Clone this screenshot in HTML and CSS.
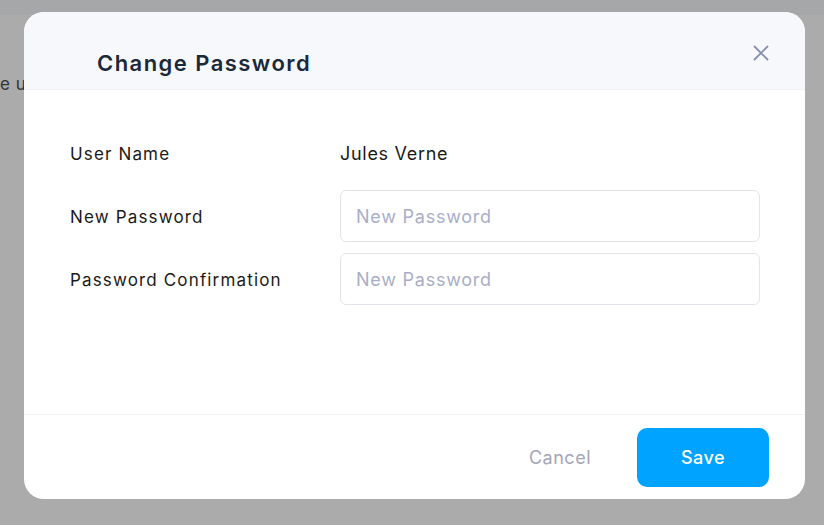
FILE: index.html
```html
<!DOCTYPE html>
<html>
<head>
<meta charset="utf-8">
<link rel="stylesheet" href="styles.css">
</head>
<body>
<div class="page">
  <div class="topbar"></div>
  <div class="behind-text">e u</div>
</div>
<div class="overlay">
  <div class="modal">
    <div class="modal-header">
      <h2 class="modal-title">Change Password</h2>
      <button class="close-btn" aria-label="Close">
        <svg width="16" height="16" viewBox="0 0 16 16"><path d="M1.5 1.5 L14.5 14.5 M14.5 1.5 L1.5 14.5" stroke="#8a8eae" stroke-width="1.8" stroke-linecap="round" fill="none"/></svg>
      </button>
    </div>
    <div class="modal-body">
      <div class="row">
        <div class="label">User Name</div>
        <div class="value">Jules Verne</div>
      </div>
      <div class="row">
        <div class="label">New Password</div>
        <input class="input" type="password" placeholder="New Password">
      </div>
      <div class="row">
        <div class="label">Password Confirmation</div>
        <input class="input" type="password" placeholder="New Password">
      </div>
    </div>
    <div class="modal-footer">
      <button class="btn-cancel">Cancel</button>
      <button class="btn-save">Save</button>
    </div>
  </div>
</div>
</body>
</html>
```
FILE: styles.css
```css
* { box-sizing: border-box; }
html, body { margin: 0; padding: 0; }
body {
  width: 824px;
  height: 525px;
  background: #ababab;
  font-family: "Inter", "Open Sans", sans-serif;
  overflow: hidden;
  position: relative;
}
.page { height: 525px; }
.topbar { height: 15px; background: #a6a7a9; }
.behind-text {
  margin-top: 58px;
  font-size: 17px;
  line-height: 22px;
  letter-spacing: 0.5px;
  color: #333;
}
.overlay {
  position: absolute;
  inset: 0;
  padding: 12px 19px 0 24px;
}
.modal {
  width: 781px;
  height: 487px;
  background: #fff;
  border-radius: 20px;
  overflow: hidden;
  display: flex;
  flex-direction: column;
}
.modal-header {
  height: 78px;
  background: #f7f8fc;
  border-bottom: 1px solid #eef0f5;
  display: flex;
  justify-content: space-between;
  align-items: flex-start;
  padding: 0 36px 0 73px;
}
.modal-title {
  margin: 36px 0 0;
  font-size: 22px;
  line-height: 30px;
  font-weight: 600;
  letter-spacing: 1.45px;
  color: #1b2a3a;
}
.close-btn {
  margin-top: 33px;
  padding: 0;
  border: 0;
  background: none;
  width: 16px;
  height: 16px;
  display: flex;
}
.modal-body {
  flex: 1;
  padding: 37px 45px 0 46px;
  display: flex;
  flex-direction: column;
  gap: 11px;
}
.row {
  display: flex;
  align-items: center;
  height: 52px;
}
.label {
  width: 270px;
  font-size: 17px;
  line-height: 22px;
  padding-top: 1px;
  letter-spacing: 1.15px;
  color: #1a1a1a;
}
.value {
  font-size: 18px;
  line-height: 22px;
  padding-top: 1px;
  letter-spacing: 0.7px;
  color: #1a1a1a;
}
.input {
  flex: 1;
  height: 52px;
  border: 1px solid #e2e4ec;
  border-radius: 6px;
  padding: 0 15px;
  font-family: inherit;
  font-size: 18px;
  letter-spacing: 0.75px;
  color: #1a1a1a;
  outline: none;
}
.input::placeholder { color: #a9aec8; }
.modal-footer {
  height: 85px;
  border-top: 1px solid #f1f2f5;
  display: flex;
  justify-content: flex-end;
  align-items: center;
  padding: 1px 36px 0 0;
  gap: 23px;
}
.btn-cancel {
  border: 0;
  background: none;
  font-family: inherit;
  font-size: 18px;
  letter-spacing: 0.5px;
  color: #a3a6b8;
  padding: 0 23px;
}
.btn-save {
  width: 132px;
  height: 59px;
  border: 0;
  border-radius: 10px;
  background: #00a3ff;
  color: #fff;
  font-family: inherit;
  font-size: 18px;
  font-weight: 500;
  letter-spacing: 0.5px;
}
```
